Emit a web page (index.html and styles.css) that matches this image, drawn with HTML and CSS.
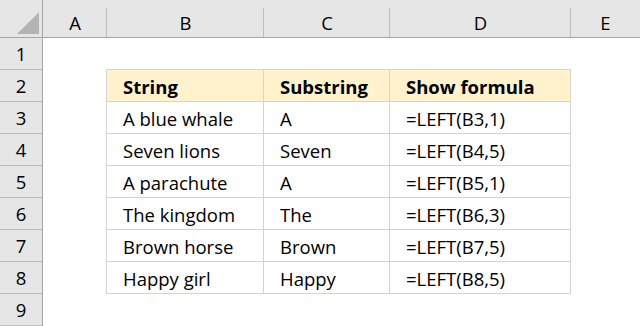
FILE: index.html
```html
<!DOCTYPE html>
<html>
<head>
<meta charset="utf-8">
<link rel="stylesheet" href="styles.css">
</head>
<body>
<div class="sheet">
  <div class="corner"><span class="tri"></span></div>
  <div class="colheads">
    <div class="ch ca">A</div>
    <div class="ch cb">B</div>
    <div class="ch cc">C</div>
    <div class="ch cd">D</div>
    <div class="ch ce">E</div>
  </div>
  <div class="rowheads">
    <div class="rh">1</div><div class="rh">2</div><div class="rh">3</div>
    <div class="rh">4</div><div class="rh">5</div><div class="rh">6</div>
    <div class="rh">7</div><div class="rh">8</div><div class="rh">9</div>
  </div>
  <div class="cells">
    <div class="tbl">
      <div class="c hd">String</div><div class="c hd">Substring</div><div class="c hd">Show formula</div>
      <div class="c">A blue whale</div><div class="c">A</div><div class="c">=LEFT(B3,1)</div>
      <div class="c">Seven lions</div><div class="c">Seven</div><div class="c">=LEFT(B4,5)</div>
      <div class="c">A parachute</div><div class="c">A</div><div class="c">=LEFT(B5,1)</div>
      <div class="c">The kingdom</div><div class="c">The</div><div class="c">=LEFT(B6,3)</div>
      <div class="c">Brown horse</div><div class="c">Brown</div><div class="c">=LEFT(B7,5)</div>
      <div class="c">Happy girl</div><div class="c">Happy</div><div class="c">=LEFT(B8,5)</div>
    </div>
  </div>
</div>
</body>
</html>
```
FILE: styles.css
```css
* { box-sizing: border-box; }
html, body { margin: 0; padding: 0; background: #ffffff; }
body {
  width: 640px;
  height: 326px;
  overflow: hidden;
  font-family: "Open Sans", "Liberation Sans", sans-serif;
  color: #000;
}
.sheet {
  display: grid;
  grid-template-columns: 43px 1fr;
  grid-template-rows: 38px 288px;
  height: 326px;
}
.corner {
  background: #e6e6e6;
  border-right: 1px solid #a6a6a6;
  border-bottom: 1px solid #a6a6a6;
  position: relative;
}
.tri {
  position: absolute;
  left: 17px;
  top: 12px;
  width: 0;
  height: 0;
  border-left: 22px solid transparent;
  border-bottom: 22px solid #b4b4b4;
}
.colheads {
  display: flex;
  background: #e6e6e6;
  border-bottom: 1px solid #a6a6a6;
}
.ch {
  display: flex;
  align-items: center;
  justify-content: center;
  padding-top: 8px;
  font-size: 18.5px;
  position: relative;
}
.ch::after {
  content: "";
  position: absolute;
  right: 0;
  top: 8px;
  bottom: 0;
  width: 1px;
  background: #bcbcbc;
}
.ca { width: 64px; }
.cb { width: 157px; }
.cc { width: 126px; }
.cd { width: 181px; }
.ce { flex: 1; }
.ce::after { display: none; }
.rowheads {
  display: flex;
  flex-direction: column;
  background: #e6e6e6;
  border-right: 1px solid #a6a6a6;
}
.rh {
  height: 32px;
  flex: none;
  display: flex;
  align-items: center;
  justify-content: center;
  font-size: 18.5px;
  border-bottom: 1px solid #bcbcbc;
}
.cells {
  padding-top: 31px;
  padding-left: 63px;
}
.tbl {
  display: grid;
  grid-template-columns: 157px 126px 181px;
  grid-auto-rows: 32px;
  width: 465px;
  border-top: 1px solid #d4d4d4;
  border-left: 1px solid #d4d4d4;
}
.c {
  border-right: 1px solid #d4d4d4;
  border-bottom: 1px solid #d4d4d4;
  display: flex;
  align-items: center;
  padding-left: 16px;
  padding-top: 1px;
  font-size: 18.5px;
  white-space: nowrap;
}
.hd {
  background: #fff2cc;
  font-weight: 700;
}
```
